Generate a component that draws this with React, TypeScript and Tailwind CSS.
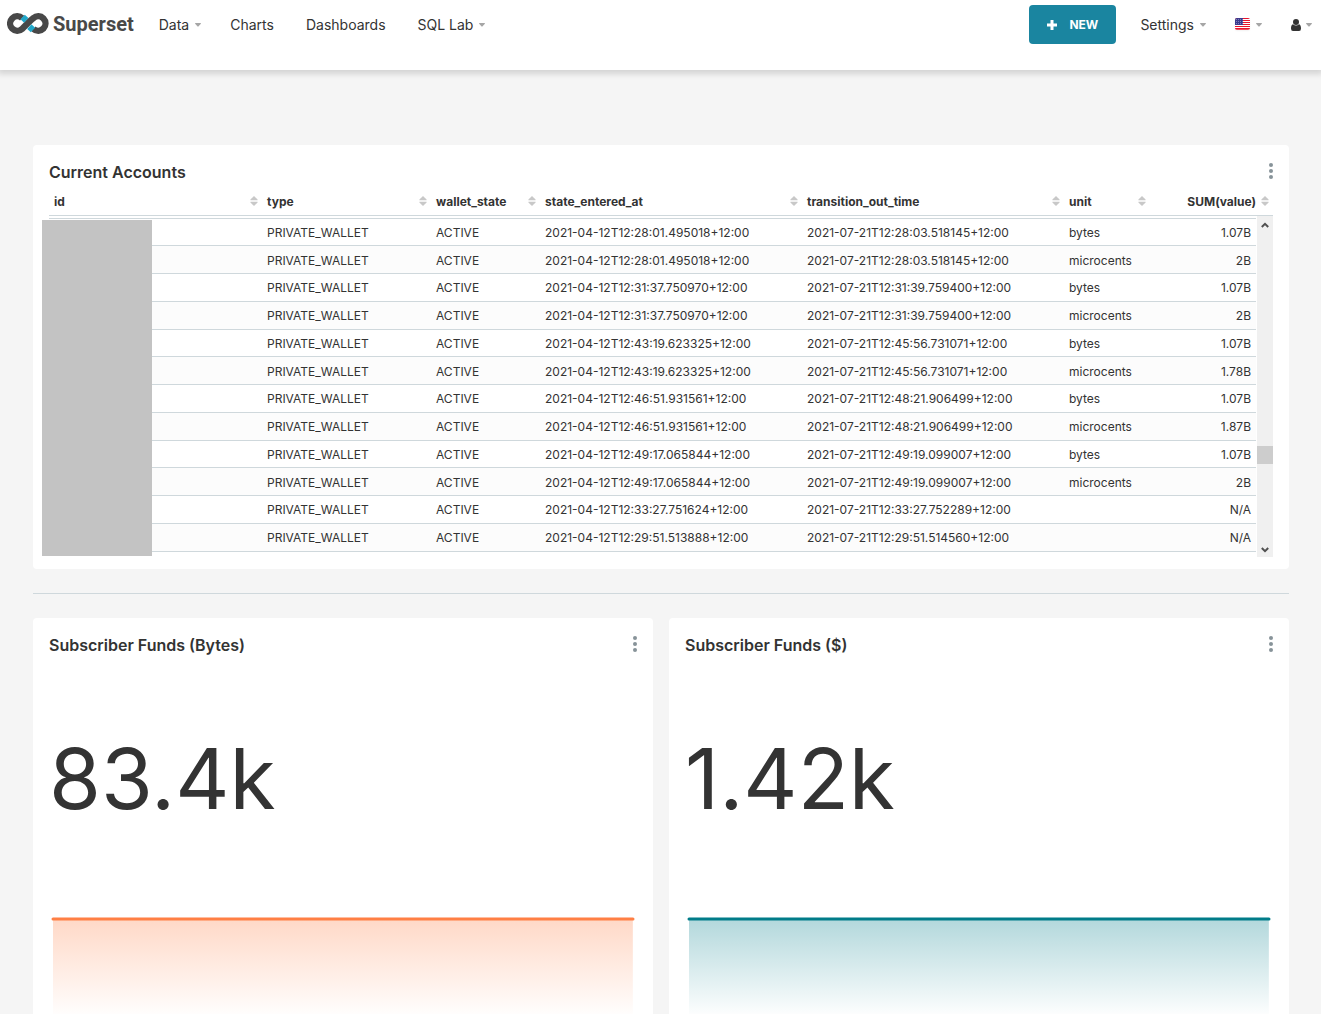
import React from 'react';

const rows: [string, string, string, string][] = [
  ['2021-04-12T12:28:01.495018+12:00', '2021-07-21T12:28:03.518145+12:00', 'bytes', '1.07B'],
  ['2021-04-12T12:28:01.495018+12:00', '2021-07-21T12:28:03.518145+12:00', 'microcents', '2B'],
  ['2021-04-12T12:31:37.750970+12:00', '2021-07-21T12:31:39.759400+12:00', 'bytes', '1.07B'],
  ['2021-04-12T12:31:37.750970+12:00', '2021-07-21T12:31:39.759400+12:00', 'microcents', '2B'],
  ['2021-04-12T12:43:19.623325+12:00', '2021-07-21T12:45:56.731071+12:00', 'bytes', '1.07B'],
  ['2021-04-12T12:43:19.623325+12:00', '2021-07-21T12:45:56.731071+12:00', 'microcents', '1.78B'],
  ['2021-04-12T12:46:51.931561+12:00', '2021-07-21T12:48:21.906499+12:00', 'bytes', '1.07B'],
  ['2021-04-12T12:46:51.931561+12:00', '2021-07-21T12:48:21.906499+12:00', 'microcents', '1.87B'],
  ['2021-04-12T12:49:17.065844+12:00', '2021-07-21T12:49:19.099007+12:00', 'bytes', '1.07B'],
  ['2021-04-12T12:49:17.065844+12:00', '2021-07-21T12:49:19.099007+12:00', 'microcents', '2B'],
  ['2021-04-12T12:33:27.751624+12:00', '2021-07-21T12:33:27.752289+12:00', '', 'N/A'],
  ['2021-04-12T12:29:51.513888+12:00', '2021-07-21T12:29:51.514560+12:00', '', 'N/A'],
];

const columns = ['id', 'type', 'wallet_state', 'state_entered_at', 'transition_out_time', 'unit', 'SUM(value)'];

function Caret() {
  return (
    <svg width="6" height="4" viewBox="0 0 6 4" className="shrink-0" aria-hidden="true">
      <path d="M0.4 0H5.6Q6 0 5.9 0.8L3.6 3.3Q3 4 2.4 3.3L0.1 0.8Q0 0 0.4 0Z" fill="#a6a6a6" />
    </svg>
  );
}

function SortIcon() {
  return (
    <svg width="8" height="10" viewBox="0 0 8 10" className="mb-0.5 shrink-0" aria-hidden="true">
      <path d="M4 0L7.6 3.6V4.3H0.4V3.6Z" fill="#c8c8c8" />
      <path d="M4 10L7.6 6.4V5.7H0.4V6.4Z" fill="#c8c8c8" />
    </svg>
  );
}

function Logo() {
  return (
    <svg width="42" height="22" viewBox="0 0 42 22" aria-hidden="true">
      <path
        d="M15.2 5.2A7.2 7.2 0 1 0 15.2 15.8C18.5 12.8 22.5 8 26.4 5.2A7.2 7.2 0 1 1 26.4 15.8"
        fill="none"
        stroke="#484848"
        strokeWidth="6.4"
      />
      <path d="M13.5 6.2L17.8 1.7L21.4 4.9L17.1 9.8Z" fill="#20a7c9" />
      <path d="M28.1 14.8L23.8 19.3L20.2 16.1L24.5 11.2Z" fill="#20a7c9" />
    </svg>
  );
}

function Flag() {
  return (
    <svg width="15" height="12" viewBox="0 0 15 12" className="mb-0.5 rounded-xs shadow-xs" role="img" aria-label="English">
      <rect width="15" height="12" fill="#fff" />
      {[0, 2, 4, 6, 8, 10].map((y) => (
        <rect key={y} y={y} width="15" height="1" fill="#e8112d" />
      ))}
      <rect y="11" width="15" height="1" fill="#f0505f" />
      <rect width="8" height="7" fill="#3c3b8e" />
      {[1, 3, 5].map((y) =>
        [1, 3, 5, 7].map((x) => <rect key={`${x}-${y}`} x={x} y={y} width="0.6" height="0.8" fill="#c9c9e6" />),
      )}
    </svg>
  );
}

function Kebab({ label }: { label: string }) {
  return (
    <button type="button" aria-label={label} className="mt-px flex h-4 w-4 cursor-pointer items-center justify-center">
      <svg width="4" height="16" viewBox="0 0 4 16" aria-hidden="true">
        <circle cx="2" cy="2" r="2" fill="#879399" />
        <circle cx="2" cy="8" r="2" fill="#879399" />
        <circle cx="2" cy="14" r="2" fill="#879399" />
      </svg>
    </button>
  );
}

function CardHeader({ title }: { title: string }) {
  return (
    <div className="flex items-start justify-between pt-[17px] pr-2.5 pl-4">
      <h2 className="text-base leading-5 font-semibold">{title}</h2>
      <Kebab label={`${title} options`} />
    </div>
  );
}

function Columns({ last }: { last: 'head' | 'body' }) {
  return (
    <colgroup>
      <col />
      <col className="w-[169px]" />
      <col className="w-[109px]" />
      <col className="w-[262px]" />
      <col className="w-[262px]" />
      <col className="w-[86px]" />
      <col className={last === 'head' ? 'w-[123px]' : 'w-[106px]'} />
    </colgroup>
  );
}

function AccountsTable() {
  return (
    <div className="px-4 pb-3">
      <table className="w-full table-fixed border-collapse text-xs">
        <Columns last="head" />
        <thead>
          <tr className="border-b border-[#cfd8dc]">
            {columns.map((name, i) => (
              <th key={name} scope="col" className="h-[33px] pt-2 pr-1 pb-0 pl-[5px] text-left font-bold">
                <span className={i === 6 ? 'flex items-center justify-end gap-[5px]' : 'flex items-center justify-between'}>
                  {name}
                  <SortIcon />
                </span>
              </th>
            ))}
          </tr>
        </thead>
      </table>
      <div className="relative flex">
        <div className="min-w-0 flex-1 pt-0.5 pr-px">
          <table className="h-[334px] w-full table-fixed border-collapse border-t border-[#cfd8dc] text-xs">
            <Columns last="body" />
            <tbody>
              {rows.map(([entered, out, unit, sum], i) => (
                <tr key={i} className="border-b border-[#cfd8dc] even:bg-[#fcfcfc]">
                  <td />
                  <td className="px-[5px] pt-0.5">PRIVATE_WALLET</td>
                  <td className="px-[5px] pt-0.5">ACTIVE</td>
                  <td className="px-[5px] pt-0.5">{entered}</td>
                  <td className="px-[5px] pt-0.5">{out}</td>
                  <td className="px-[5px] pt-0.5">{unit}</td>
                  <td className="px-[5px] pt-0.5 text-right">{sum}</td>
                </tr>
              ))}
            </tbody>
          </table>
        </div>
        <div className="flex h-[341px] w-4 flex-col items-center bg-[#f0f0f0]" aria-hidden="true">
          <svg width="8" height="6" viewBox="0 0 8 6" className="mt-1.5">
            <path d="M0.8 5L4 1.8L7.2 5" fill="none" stroke="#505050" strokeWidth="2" />
          </svg>
          <div className="flex-[217]" />
          <div className="h-[18px] w-full bg-[#cdcdcd]" />
          <div className="flex-[82]" />
          <svg width="8" height="6" viewBox="0 0 8 6" className="mb-1">
            <path d="M0.8 1L4 4.2L7.2 1" fill="none" stroke="#505050" strokeWidth="2" />
          </svg>
        </div>
        <div className="absolute top-1 -left-[7px] h-[336px] w-[110px] bg-[#c3c3c3]" />
      </div>
    </div>
  );
}

function FundsCard({ title, value, color, id }: { title: string; value: string; color: string; id: string }) {
  return (
    <section className="h-[440px] rounded-sm bg-white">
      <CardHeader title={title} />
      <p className="mt-[72px] pl-4 text-[84px] leading-[104px]">{value}</p>
      <div className="mt-[85px] pr-5 pl-[19px]">
        <svg width="100%" height="102" aria-hidden="true" className="block overflow-visible">
          <defs>
            <linearGradient id={id} x1="0" y1="0" x2="0" y2="1">
              <stop offset="0" stopColor={color} stopOpacity="0.3" />
              <stop offset="1" stopColor={color} stopOpacity="0" />
            </linearGradient>
          </defs>
          <rect x="1" y="3" width="99.8%" height="99" fill={`url(#${id})`} />
          <line x1="1" x2="100%" y1="3" y2="3" stroke={color} strokeWidth="3" strokeLinecap="round" />
        </svg>
      </div>
    </section>
  );
}

export default function App() {
  return (
    <div className="h-screen overflow-hidden bg-[#f5f5f5] font-[Inter,sans-serif] text-[#333]">
      <header className="flex h-[70px] items-start justify-between bg-white shadow-[0_2px_6px_2px_rgba(0,0,0,0.14)]">
        <div className="flex">
          <a href="#home" className="flex h-[47px] items-center gap-1 pl-[7px] font-[Roboto,sans-serif] text-xl font-bold text-[#484848]">
            <Logo />
            Superset
          </a>
          <nav className="ml-[25px] flex h-[50px] items-center gap-8 text-sm">
            <button type="button" className="-mr-[3px] flex cursor-pointer items-center gap-[6px]">Data <Caret /></button>
            <a href="#charts">Charts</a>
            <a href="#dashboards">Dashboards</a>
            <button type="button" className="flex cursor-pointer items-center gap-[6px]">SQL Lab <Caret /></button>
          </nav>
        </div>
        <div className="flex items-start pr-[9px] text-sm">
          <button type="button" className="mt-[5px] mr-6 flex h-[39px] w-[87px] cursor-pointer items-center justify-center gap-3 rounded-sm bg-[#1a85a0] text-xs font-bold text-white">
            <svg width="10" height="10" viewBox="0 0 10 10" aria-hidden="true">
              <path d="M5 0V10M0 5H10" stroke="#fff" strokeWidth="3" />
            </svg>
            NEW
          </button>
          <div className="flex h-[50px] items-center">
            <button type="button" className="flex cursor-pointer items-center gap-[6px]">Settings <Caret /></button>
            <button type="button" className="ml-[29px] flex cursor-pointer items-center gap-[6px]"><Flag /><Caret /></button>
            <button type="button" aria-label="User" className="ml-[29px] flex cursor-pointer items-center gap-[5px]">
              <svg width="10" height="12" viewBox="0 0 10 12" aria-hidden="true">
                <circle cx="5" cy="3" r="3" fill="#333" />
                <path d="M2 5.2C0.5 5.7 0 7.5 0 9.5Q0 12 2 12H8Q10 12 10 9.5C10 7.5 9.5 5.7 8 5.2Q5 8 2 5.2Z" fill="#333" />
              </svg>
              <Caret />
            </button>
          </div>
        </div>
      </header>
      <main className="mt-[75px] mr-8 ml-[33px]">
        <section className="rounded-sm bg-white">
          <CardHeader title="Current Accounts" />
          <AccountsTable />
        </section>
        <hr className="my-6 border-[#cfd8dc]" />
        <div className="grid grid-cols-2 gap-4">
          <FundsCard id="bytes-fill" title="Subscriber Funds (Bytes)" value="83.4k" color="#ff7f44" />
          <FundsCard id="dollars-fill" title="Subscriber Funds ($)" value="1.42k" color="#007c89" />
        </div>
      </main>
    </div>
  );
}
